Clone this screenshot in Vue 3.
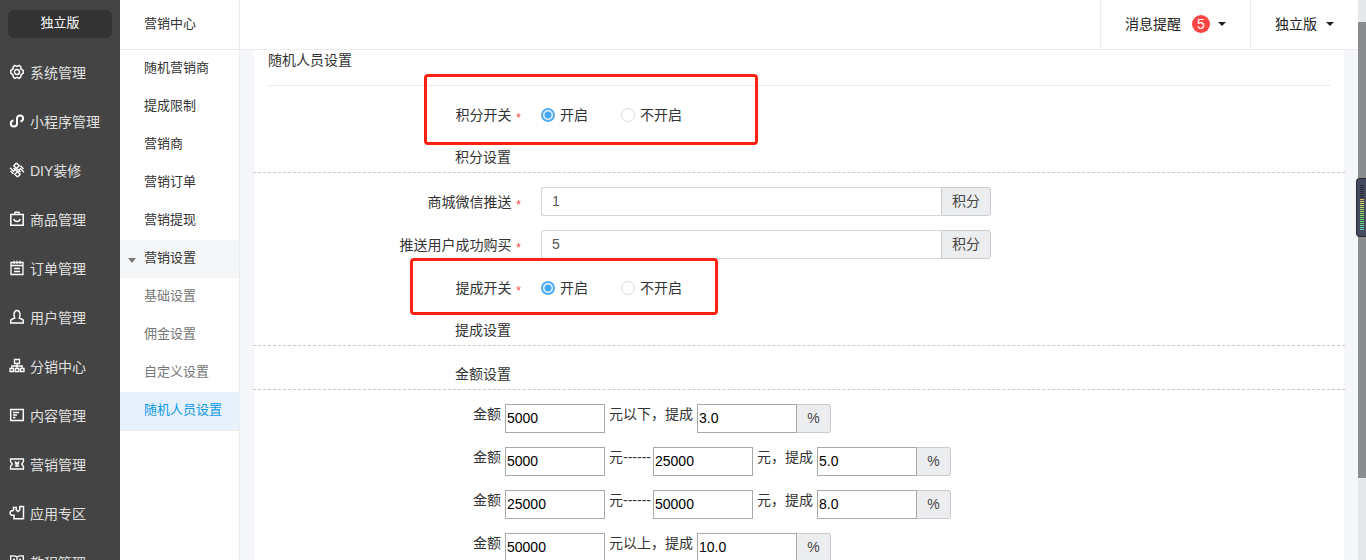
<template>
  <div class="app">
    <nav class="main-nav">
      <button type="button" class="version">独立版</button>
      <a v-for="item in mainMenu" :key="item.name" href="#" class="main-link">
        <svg class="icon" viewBox="0 0 16 16" aria-hidden="true">
          <path v-for="(d, i) in item.paths" :key="i" :d="d" :stroke-width="item.stroke || 1.5" />
        </svg>
        <span>{{ item.name }}</span>
      </a>
    </nav>

    <nav class="sub-nav">
      <h2 class="sub-title">营销中心</h2>
      <a
        v-for="item in subMenu"
        :key="item.name"
        href="#"
        class="sub-link"
        :class="item.type"
      >
        <span v-if="item.type === 'open'" class="arrow"></span>{{ item.name }}
      </a>
    </nav>

    <div class="page">
      <header class="topbar">
        <button type="button" class="top-item notice">
          消息提醒 <span class="badge">5</span><span class="caret"></span>
        </button>
        <button type="button" class="top-item account">独立版<span class="caret"></span></button>
      </header>

      <main class="content">
        <form class="panel" @submit.prevent>
          <h1 class="panel-title">随机人员设置</h1>

          <div class="form-row" role="radiogroup" aria-labelledby="points-label">
            <span id="points-label" class="form-label">积分开关 <i class="required">*</i></span>
            <label class="radio"><input type="radio" v-model="points" value="1" />开启</label>
            <label class="radio"><input type="radio" v-model="points" value="0" />不开启</label>
            <span class="mark mark-points"></span>
          </div>

          <h3 class="section">积分设置</h3>

          <div v-for="row in pointRows" :key="row.id" class="form-row">
            <label :for="row.id" class="form-label">{{ row.label }} <i class="required">*</i></label>
            <div class="input-group">
              <input :id="row.id" type="text" v-model="row.value" class="form-control" />
              <span class="addon">积分</span>
            </div>
          </div>

          <div class="form-row" role="radiogroup" aria-labelledby="commission-label">
            <span id="commission-label" class="form-label">提成开关 <i class="required">*</i></span>
            <label class="radio"><input type="radio" v-model="commission" value="1" />开启</label>
            <label class="radio"><input type="radio" v-model="commission" value="0" />不开启</label>
            <span class="mark mark-commission"></span>
          </div>

          <h3 class="section">提成设置</h3>
          <h3 class="section">金额设置</h3>

          <div v-for="(row, i) in amounts" :key="i" class="amount-row">
            <label :for="'from' + i">金额</label>
            <input :id="'from' + i" type="text" v-model="row.from" class="amount" />
            <template v-if="row.to">
              <label :for="'to' + i" class="range">元------</label>
              <input :id="'to' + i" type="text" v-model="row.to" class="amount" />
            </template>
            <label :for="'rate' + i" class="rate-label">{{ row.text }}</label>
            <input :id="'rate' + i" type="text" v-model="row.rate" class="amount" />
            <span class="addon percent">%</span>
          </div>
        </form>
      </main>
    </div>

    <div class="scrollbar"><div class="thumb"></div></div>
    <div class="meter">
      <span v-for="(color, i) in bars" :key="i" :style="{ background: color }"></span>
    </div>
  </div>
</template>

<script setup>
import { ref } from 'vue'

const mainMenu = [
  {
    name: '系统管理',
    paths: [
      'M5.8 1.4L8 2.400l2.200-1 1.600 1.400.2 2.200 2.200 1.400v2.800L12 10.800l-.2 2.200-1.600 1.400-2.200-1-2.200 1L4.200 13 4 10.800 1.800 9.200V6.400L4 5l.2-2.200z',
      'M8 5.400a2.500 2.500 0 1 0 0 5 2.500 2.500 0 0 0 0-5z'
    ]
  },
  {
    name: '小程序管理',
    stroke: 2,
    paths: ['M4.600 7.600C2.800 7.800 1.800 9 1.800 10.500c0 1.800 1.300 3 3 3S8 12.300 8 10.500v-5c0-1.800 1.400-3 3.100-3s3 1.200 3 3c0 1.500-1 2.600-2.700 2.900']
  },
  {
    name: 'DIY装修',
    stroke: 1.4,
    paths: [
      'M7.500 1l2.700 2.700L4.500 9.200 1 5.800M7.500 1L4.800 3.700l6.700 6.500',
      'M8.500 15l-2.700-2.700 5.700-5.500L15 10.200M8.500 15l2.700-2.700L4.500 6',
      'M11.500 3.800L14.500 7M1.500 9l3 3'
    ]
  },
  {
    name: '商品管理',
    paths: ['M1.800 3.500h12.400v10.700H1.800z', 'M5.200 3.500l1-2.300h3.600l1 2.300', 'M4.800 8c1 3.200 5.400 3.200 6.400 0']
  },
  {
    name: '订单管理',
    paths: ['M2 2.500h12v12H2z', 'M2 5.500h12M5 .8v3M8 .8v3M11 .8v3M5 8.500h6M5 11.500h6'],
    stroke: 1.3
  },
  {
    name: '用户管理',
    paths: ['M5.800 9C4.500 6.500 4.600 1.500 8 1.500S11.500 6.500 10.200 9l3.200 1.500c.6.300.9.8.9 1.500v2H1.700v-2c0-.7.300-1.200.9-1.500z']
  },
  {
    name: '分销中心',
    paths: ['M5.500 1.500h5v4h-5z', 'M1 10.500h3.500v3H1zM6.300 10.500h3.500v3H6.300zM11.500 10.500H15v3h-3.500z', 'M8 5.500v5M2.800 10.500V8h10.400v2.500'],
    stroke: 1.3
  },
  {
    name: '内容管理',
    paths: ['M1.700 2.500h12.600v11H1.700z', 'M4 5.500h6M4 8h4M4 10.500h2.500']
  },
  {
    name: '营销管理',
    paths: ['M1.500 3h13v2.500L12.700 8l1.800 2.500V13h-13v-2.500L3.300 8 1.500 5.500z', 'M5.800 5.500L8 7.500l2.200-2M8 7v4M5.800 7.800h4.400M5.800 9.800h4.400'],
    stroke: 1.3
  },
  {
    name: '应用专区',
    paths: ['M4.500 5.500v-3h2.800V5L9 6.500 10.800 5V1.500h3.700v12.300H5v-3.500H2.500L1.200 9V7l1.300-1.200h2']
  },
  {
    name: '教程管理',
    paths: ['M8 3C6.500 1.800 4 1.800 1.700 2v11.500c2.300-.2 4.800-.2 6.300 1 1.500-1.200 4-1.200 6.300-1V2C12 1.800 9.500 1.800 8 3zM8 3v11.500', 'M4 5.500h2M10 5.500h2'],
    stroke: 1.3
  }
]

const subMenu = [
  { name: '随机营销商' },
  { name: '提成限制' },
  { name: '营销商' },
  { name: '营销订单' },
  { name: '营销提现' },
  { name: '营销设置', type: 'open' },
  { name: '基础设置', type: 'child' },
  { name: '佣金设置', type: 'child' },
  { name: '自定义设置', type: 'child' },
  { name: '随机人员设置', type: 'active' }
]

const points = ref('1')
const commission = ref('1')

const pointRows = ref([
  { id: 'wechat-push', label: '商城微信推送', value: '1' },
  { id: 'buy-push', label: '推送用户成功购买', value: '5' }
])

const amounts = ref([
  { from: '5000', text: '元以下，提成', rate: '3.0' },
  { from: '5000', to: '25000', text: '元，提成', rate: '5.0' },
  { from: '25000', to: '50000', text: '元，提成', rate: '8.0' },
  { from: '50000', text: '元以上，提成', rate: '10.0' }
])

// 7 unlit bars, then yellow to teal
const bars = Array.from({ length: 23 }, (_, i) =>
  i < 7 ? '#272b3a' : `hsl(${42 + (i - 7) * 8}, 65%, 64%)`
)
</script>

<style>
body {
  margin: 0;
}
</style>

<style scoped>
.app {
  position: relative;
  display: flex;
  height: 100vh;
  overflow: hidden;
  background: #f5f6f9;
  color: #333;
  font-family: "Liberation Sans", "Noto Sans CJK SC", sans-serif;
  font-size: 14px;
  line-height: 20px;
}

* {
  box-sizing: border-box;
}

a {
  color: inherit;
  text-decoration: none;
}

button,
input {
  font-family: inherit;
  font-size: 14px;
  line-height: 20px;
}

h1,
h2,
h3 {
  margin: 0;
  font-weight: normal;
}

.main-nav {
  flex: none;
  width: 120px;
  background: #444;
  overflow: hidden;
}

.version {
  display: block;
  width: 104px;
  height: 28px;
  margin: 10px 8px;
  padding: 0 0 2px;
  border: 0;
  border-radius: 6px;
  background: #333;
  color: #fff;
  font-size: 13px;
}

.main-link {
  display: flex;
  align-items: center;
  gap: 5px;
  height: 49px;
  padding-left: 9px;
  color: #e0e0e0;
}

.icon {
  width: 16px;
  height: 16px;
  margin-bottom: 2px;
  fill: none;
  stroke: #fff;
}

.sub-nav {
  flex: none;
  width: 120px;
  background: #fff;
  border-right: 1px solid #eaecef;
  font-size: 13px;
}

.sub-title {
  height: 50px;
  padding-left: 24px;
  border-bottom: 1px solid #ebebeb;
  font-size: 13px;
  line-height: 48px;
}

.sub-link {
  position: relative;
  display: block;
  height: 38px;
  padding-left: 24px;
  line-height: 36px;
}

.open {
  background: #f5f6f8;
}

.child {
  color: #777;
}

.active {
  height: 39px;
  border-bottom: 1px solid #ebebeb;
  background: #e6f1fc;
  color: #0f9ae8;
}

.arrow {
  position: absolute;
  left: 8px;
  top: 18px;
  border: 4px solid transparent;
  border-top: 5px solid #777;
  border-bottom: 0;
}

.page {
  flex: 1;
  display: flex;
  flex-direction: column;
  min-width: 0;
}

.topbar {
  display: flex;
  flex: none;
  justify-content: flex-end;
  height: 50px;
  background: #fff;
  border-bottom: 1px solid #ebebeb;
}

.top-item {
  display: flex;
  align-items: center;
  padding: 0 24px 2px;
  border: 0;
  border-left: 1px solid #ebebeb;
  background: none;
  color: #222;
}

.badge {
  width: 18px;
  height: 18px;
  margin: 0 8px 0 11px;
  border-radius: 50%;
  background: #ff4444;
  color: #fff;
  line-height: 18px;
}

.caret {
  border: 4px solid transparent;
  border-top-color: #222;
  border-bottom: 0;
}

.account .caret {
  margin-left: 9px;
}

.content {
  flex: 1;
  min-height: 0;
  overflow: hidden;
  padding: 0 14px;
}

.panel {
  padding: 0 14px 14px;
  background: #fff;
}

.panel-title {
  padding-bottom: 15px;
  margin-bottom: 14px;
  border-bottom: 1px solid #ebebeb;
  font-size: 14px;
}

.form-row {
  position: relative;
  display: flex;
  align-items: center;
  height: 29px;
  margin-bottom: 14px;
}

.form-label {
  width: 253px;
  margin-right: 20px;
  text-align: right;
}

.required {
  margin-left: 1px;
  color: #ff4444;
  font-size: 12px;
  font-style: normal;
  line-height: 12px;
  vertical-align: -2px;
}

.radio {
  display: flex;
  align-items: center;
  gap: 5px;
  margin-right: 33px;
}

.radio input {
  appearance: none;
  width: 14px;
  height: 14px;
  margin: 0;
  border: 1px solid #ddd;
  border-radius: 50%;
}

.radio input:checked {
  border: 2px solid #54adf3;
  background: radial-gradient(circle, #44a8f5 3px, #e4f3ff 4px);
}

.mark {
  position: absolute;
  border: 3px solid #ff2012;
  border-radius: 4px;
  pointer-events: none;
}

.mark-points {
  left: 156px;
  top: -26px;
  width: 334px;
  height: 71px;
}

.mark-commission {
  left: 142px;
  top: -15px;
  width: 308px;
  height: 57px;
}

.section {
  height: 30px;
  margin: 0 -15px 14px;
  padding-left: 202px;
  border-bottom: 1px dashed #c8c8c8;
  font-size: 14px;
  line-height: 28px;
}

.input-group {
  display: flex;
  flex: 0 1 450px;
  height: 29px;
}

.form-control {
  flex: 1;
  min-width: 0;
  padding: 0 10px 2px;
  border: 1px solid #d5d5d5;
  border-right: 0;
  border-radius: 3px 0 0 3px;
  color: #555;
}

.addon {
  width: 50px;
  height: 29px;
  border: 1px solid #c9cbce;
  border-radius: 0 3px 3px 0;
  background: #ecedef;
  color: #444;
  line-height: 27px;
  text-align: center;
}

.amount-row {
  display: flex;
  margin-bottom: 14px;
  padding-left: 205px;
}

.amount {
  width: 100px;
  height: 29px;
  margin: 0 0 0 4px;
  padding: 0 1px 2px;
  border: 1px solid #a9a9a9;
  background: #fff;
  color: #000;
}

.range {
  width: 44px;
  margin-left: 4px;
}

.range + .amount {
  margin-left: 0;
}

.rate-label {
  margin-left: 4px;
}

.percent {
  width: 34px;
  border-left: 0;
}

.scrollbar {
  flex: none;
  width: 8px;
  padding-top: 22px;
  background: #e7e8ea;
}

.thumb {
  height: 456px;
  background: #8b8c8e;
}

.meter {
  position: absolute;
  right: 0;
  top: 178px;
  display: flex;
  flex-direction: column;
  gap: 1px;
  width: 10px;
  height: 59px;
  padding: 6px 2px 0 3px;
  border: 1px solid #272b3a;
  border-right: 0;
  border-radius: 4px 0 0 4px;
  background: #454a5e;
}

.meter span {
  width: 4px;
  height: 1px;
}
</style>
